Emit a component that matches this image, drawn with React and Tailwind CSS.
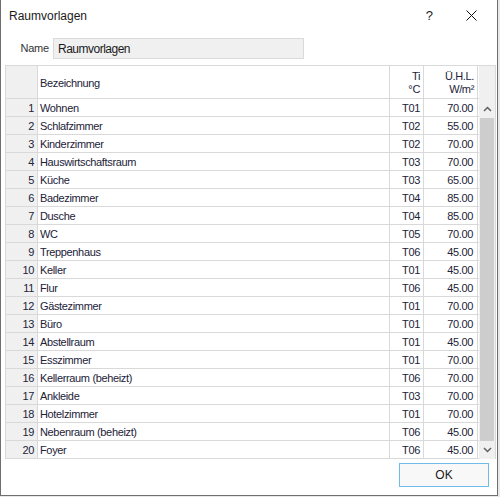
import React from "react";

const rows = [
  ["Wohnen", "T01", "70.00"],
  ["Schlafzimmer", "T02", "55.00"],
  ["Kinderzimmer", "T02", "70.00"],
  ["Hauswirtschaftsraum", "T03", "70.00"],
  ["Küche", "T03", "65.00"],
  ["Badezimmer", "T04", "85.00"],
  ["Dusche", "T04", "85.00"],
  ["WC", "T05", "70.00"],
  ["Treppenhaus", "T06", "45.00"],
  ["Keller", "T01", "45.00"],
  ["Flur", "T06", "45.00"],
  ["Gästezimmer", "T01", "70.00"],
  ["Büro", "T01", "70.00"],
  ["Abstellraum", "T01", "45.00"],
  ["Esszimmer", "T01", "70.00"],
  ["Kellerraum (beheizt)", "T06", "70.00"],
  ["Ankleide", "T03", "70.00"],
  ["Hotelzimmer", "T01", "70.00"],
  ["Nebenraum (beheizt)", "T06", "45.00"],
  ["Foyer", "T06", "45.00"],
];

const font = { fontFamily: "'Liberation Sans', Arial, sans-serif" };

export default function App() {
  return (
    <div className="w-[500px] h-[497px] bg-[#e8e8e8]" style={font}>
      <div className="w-[498px] h-[496px] bg-white border-l border-r border-b border-[#6f6f6f] flex flex-col text-[#1a1a1a]">
        {/* Title bar */}
        <div className="h-[31px] flex items-center shrink-0">
          <span className="ml-[8px] text-[12px]">Raumvorlagen</span>
          <span className="ml-auto mr-[33px] text-[13px]">?</span>
          <svg width="11" height="11" viewBox="0 0 11 11" className="mr-[20px]">
            <path d="M0.5 0.5 L10.5 10.5 M10.5 0.5 L0.5 10.5" stroke="#111" strokeWidth="1" />
          </svg>
        </div>

        {/* Name field */}
        <div className="flex items-center mt-[7px] h-[21px] text-[11px] tracking-[-0.2px]">
          <span className="w-[48px] text-right text-[#333]">Name</span>
          <div className="ml-[4px] w-[251px] h-[21px] bg-[#f0f0f0] border border-[#dadada] flex items-center pl-[4px] text-[12px] tracking-[-0.5px]">
            Raumvorlagen
          </div>
        </div>

        {/* Grid */}
        <div className="mt-[6px] ml-[4px] w-[491px] flex border-l border-t border-r border-[#d9d9d9] text-[11px] tracking-[-0.35px] text-[#222238]">
          <div className="flex flex-col w-[473px]">
            <div className="flex h-[33px] border-b border-[#d9d9d9]">
              <div className="w-[32px] bg-[#f0f0f0] border-r border-[#d9d9d9]" />
              <div className="w-[352px] border-r border-[#d9d9d9] flex items-center pl-[2px] pt-[2px]">
                Bezeichnung
              </div>
              <div className="w-[34px] border-r border-[#d9d9d9] flex flex-col items-end justify-center pr-[3px] pt-[1px] leading-[13px]">
                <span>Ti</span>
                <span>°C</span>
              </div>
              <div className="w-[54px] border-r border-[#d9d9d9] flex flex-col items-end justify-center pr-[3px] pt-[1px] leading-[13px]">
                <span>Ü.H.L.</span>
                <span>W/m²</span>
              </div>
            </div>
            {rows.map(([name, ti, uhl], i) => (
              <div key={i} className="flex h-[18px] border-b border-[#d9d9d9] leading-[18px]">
                <div className="w-[32px] bg-[#f0f0f0] border-r border-[#d9d9d9] text-right pr-[3px]">
                  {i + 1}
                </div>
                <div className="w-[352px] border-r border-[#d9d9d9] pl-[2px]">{name}</div>
                <div className="w-[34px] border-r border-[#d9d9d9] text-right pr-[3px]">{ti}</div>
                <div className="w-[54px] border-r border-[#d9d9d9] text-right pr-[4px]">{uhl}</div>
              </div>
            ))}
          </div>

          {/* Scrollbar */}
          <div className="w-[16px] flex flex-col bg-[#f0f0f0]">
            <div className="h-[34px]" />
            <div className="h-[18px] flex items-center justify-center">
              <svg width="9" height="6" viewBox="0 0 9 6">
                <path d="M1 5 L4.5 1.5 L8 5" fill="none" stroke="#606060" strokeWidth="1.5" />
              </svg>
            </div>
            <div className="flex-1 px-[1px]">
              <div className="h-full bg-[#cdcdcd]" />
            </div>
            <div className="h-[18px] flex items-center justify-center">
              <svg width="9" height="6" viewBox="0 0 9 6">
                <path d="M1 1 L4.5 4.5 L8 1" fill="none" stroke="#606060" strokeWidth="1.5" />
              </svg>
            </div>
          </div>
        </div>

        {/* Footer */}
        <div className="flex justify-end mt-[4px] mr-[8px]">
          <button className="w-[90px] h-[24px] border border-[#6fbce8] bg-[#f8f8f8] text-[12px] text-[#1a1a1a]">
            OK
          </button>
        </div>
      </div>
    </div>
  );
}
